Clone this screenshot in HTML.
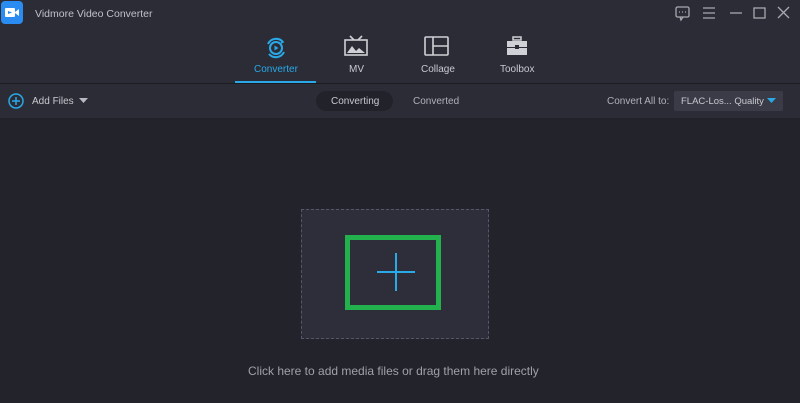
<!DOCTYPE html>
<html><head><style>
body{margin:0;width:800px;height:403px;overflow:hidden;background:#23242b;font-family:"Liberation Sans",sans-serif;position:relative}
.top{position:absolute;left:0;top:0;width:800px;height:83px;background:#2b2c36}
.tb{position:absolute;left:0;top:84px;width:800px;height:34px;background:#2b2c36}
.line{position:absolute;left:0;top:83px;width:800px;height:1px;background:#1b1c22}
.t{position:absolute;color:#c8c9cf;font-size:10px;white-space:nowrap}
</style></head><body>
<div class="top"></div><div class="line"></div><div class="tb"></div>
<div style="position:absolute;left:1px;top:1px;width:22px;height:23px;border-radius:4px;background:#2a8cf0"></div>
<svg style="position:absolute;left:4px;top:6px" width="16" height="13"><rect x="1" y="2" width="10" height="9" rx="1" fill="#fff"/><path d="M11 6 L15 3 L15 10 L11 7Z" fill="#fff"/><path d="M4 5 L8 6.5 L4 8Z" fill="#2a8cf0"/></svg>
<div class="t" style="left:35px;top:8px;font-size:10.5px;color:#c0c1c8">Vidmore Video Converter</div>
<svg style="position:absolute;left:670px;top:4px" width="130" height="18" fill="none" stroke="#a8a9b0" stroke-width="1.3">
<rect x="6" y="3" width="13" height="10" rx="1.5"/><path d="M10 13 L11 16 L13 13"/><path d="M9 8h1M12 8h1M15 8h1"/>
<path d="M33 4h12M33 9h12M33 14h12"/>
<path d="M60 9h12"/>
<rect x="84" y="4" width="11" height="10"/>
<path d="M108 3l11 11M119 3l-11 11"/></svg>
<svg style="position:absolute;left:264px;top:36px" width="24" height="24" fill="none" stroke="#29a9e8" stroke-width="2"><path d="M4 8 A9 9 0 0 1 19 6"/><path d="M20 16 A9 9 0 0 1 5 18"/><circle cx="12" cy="12" r="6"/><path d="M10.5 9.5 L14.5 12 L10.5 14.5Z" fill="#29a9e8" stroke="none"/><path d="M17 4 l2 2 l-2 1" stroke-width="1.5"/></svg>
<div class="t" style="left:254px;top:64px;color:#29a9e8">Converter</div>
<div style="position:absolute;left:235px;top:81px;width:81px;height:2px;background:#29a9e8"></div>
<svg style="position:absolute;left:344px;top:35px" width="24" height="22" fill="none" stroke="#d0d1d6" stroke-width="1.6"><rect x="1" y="5" width="22" height="15"/><path d="M6 1l4 4M18 1l-4 4"/><path d="M3 18 L8 11 L12 16 L15 13 L21 18Z" fill="#d0d1d6" stroke="none"/></svg>
<div class="t" style="left:349px;top:64px">MV</div>
<svg style="position:absolute;left:424px;top:36px" width="26" height="22" fill="none" stroke="#d0d1d6" stroke-width="1.6"><rect x="1" y="1" width="23" height="18" rx="1"/><path d="M9 1v18M9 10h15"/></svg>
<div class="t" style="left:421px;top:64px">Collage</div>
<svg style="position:absolute;left:505px;top:36px" width="24" height="22" fill="#d0d1d6"><rect x="8" y="1" width="8" height="3" fill="none" stroke="#d0d1d6" stroke-width="1.5"/><rect x="2" y="5" width="20" height="6"/><rect x="2" y="12" width="20" height="7"/><rect x="10" y="9" width="4" height="4" fill="#2b2c36"/></svg>
<div class="t" style="left:500px;top:64px">Toolbox</div>
<svg style="position:absolute;left:8px;top:93px" width="16" height="16" fill="none" stroke="#29a9e8" stroke-width="1.5"><circle cx="8" cy="8" r="7"/><path d="M8 4v8M4 8h8"/></svg>
<div class="t" style="left:32px;top:96px">Add Files</div>
<svg style="position:absolute;left:79px;top:98px" width="9" height="6"><path d="M0 0h9L4.5 5Z" fill="#b8b9c0"/></svg>
<div style="position:absolute;left:316px;top:91px;width:77px;height:20px;border-radius:10px;background:#22232a"></div>
<div class="t" style="left:331px;top:96px">Converting</div>
<div class="t" style="left:413px;top:96px;color:#b0b1b8">Converted</div>
<div class="t" style="left:607px;top:96px;color:#b0b1b8">Convert All to:</div>
<div style="position:absolute;left:674px;top:91px;width:109px;height:20px;border-radius:2px;background:#3a3b47"></div>
<div class="t" style="left:681px;top:96px;font-size:9.5px;color:#c8c9cf">FLAC-Los... Quality</div>
<svg style="position:absolute;left:767px;top:98px" width="9" height="6"><path d="M0 0h9L4.5 5Z" fill="#29a9e8"/></svg>
<div style="position:absolute;left:301px;top:209px;width:186px;height:128px;border:1px dashed #55566a;background:#2d2e39"></div>
<div style="position:absolute;left:345px;top:235px;width:86px;height:65px;border:5px solid #22b14c"></div>
<div style="position:absolute;left:377px;top:271px;width:38px;height:1.5px;background:#29a9e8"></div>
<div style="position:absolute;left:395px;top:253px;width:1.5px;height:38px;background:#29a9e8"></div>
<div class="t" style="left:248px;top:364px;font-size:12px;color:#a0a1a8">Click here to add media files or drag them here directly</div>
</body></html>
